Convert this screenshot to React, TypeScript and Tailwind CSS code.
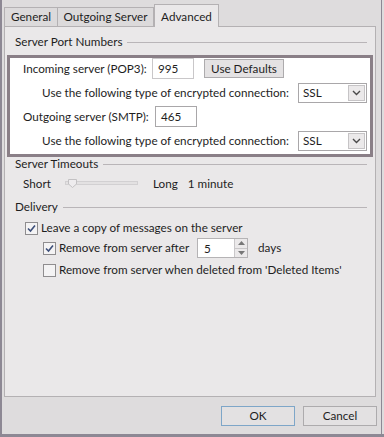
import React from "react";

const font = { fontFamily: 'Lato, "Noto Sans", "Liberation Sans", sans-serif' };

const GroupTitle = ({ label }: { label: string }) => (
  <div className="flex items-center gap-[5px] pl-[10px] pr-[8px] h-[16px]">
    <span className="whitespace-nowrap">{label}</span>
    <div className="flex-1 h-px bg-[#b9b5b8]" />
  </div>
);

const Chevron = () => (
  <svg width="9" height="6" viewBox="0 0 9 6">
    <path d="M1 1 L4.5 4.5 L8 1" fill="none" stroke="#4a4a4a" strokeWidth="1.4" />
  </svg>
);

const Select = () => (
  <div className="flex h-[20px] w-[69px] shrink-0 items-stretch border border-[#a9a7a9] bg-white">
    <span className="flex-1 pl-[4px] leading-[17px]">SSL</span>
    <div className="m-[1px] flex w-[17px] items-center justify-center border border-[#c6c4c6] bg-[#ebe9ea]">
      <Chevron />
    </div>
  </div>
);

const Check = ({ checked }: { checked: boolean }) => (
  <div className="flex h-[13px] w-[13px] shrink-0 items-center justify-center border border-[#8f8d8f] bg-[#f4f3f4]">
    {checked && (
      <svg width="9" height="9" viewBox="0 0 9 9">
        <path d="M1 4.5 L3.5 7 L8 1.5" fill="none" stroke="#3d4f7a" strokeWidth="1.6" />
      </svg>
    )}
  </div>
);

const App = () => {
  return (
    <div
      className="relative h-[437px] w-[384px] overflow-hidden whitespace-nowrap bg-[#dedcdd] text-[11.7px] text-[#1e1e1e]"
      style={font}
    >
      <div className="flex h-[434px] w-[382px] flex-col border-l-2 border-r border-[#8d8894]">
        {/* tabs */}
        <div className="flex items-end pl-[2px] pt-[3px] h-[26px]">
          <div className="flex h-[19px] w-[54px] items-center justify-center border border-b-0 border-[#b4b1b3] bg-[#dcdadb]">
            General
          </div>
          <div className="flex h-[19px] w-[96px] items-center justify-center border border-b-0 border-l-0 border-[#b4b1b3] bg-[#dcdadb]">
            Outgoing Server
          </div>
          <div className="relative z-10 -mb-px flex h-[23px] w-[65px] items-start justify-center border border-b-0 border-[#b4b1b3] bg-[#eae8e9] pt-[3px]">
            Advanced
          </div>
        </div>

        {/* panel */}
        <div className="ml-[2px] flex h-[371px] w-[372px] flex-col border border-[#b4b1b3] bg-[#eae8e9] pt-[7px]">
          <GroupTitle label="Server Port Numbers" />

          <div className="mx-[2px] mt-[5px] flex h-[102px] flex-col gap-[3px] border-[3px] border-[#8a7f87] bg-white pl-[13px] pr-[3px]">
            <div className="flex items-center h-[21px]">
              <span className="w-[129px]">Incoming server (POP3):</span>
              <div className="h-[21px] w-[42px] border border-[#c9c7c9] bg-white pl-[5px] leading-[19px]">995</div>
              <div className="ml-[10px] flex h-[19px] w-[80px] items-center justify-center border border-[#adabad] bg-[#e4e2e3]">
                Use Defaults
              </div>
            </div>
            <div className="flex items-center justify-end h-[21px] gap-[9px]">
              <span>Use the following type of encrypted connection:</span>
              <Select />
            </div>
            <div className="flex items-center h-[21px]">
              <span className="w-[132px]">Outgoing server (SMTP):</span>
              <div className="h-[21px] w-[42px] border border-[#a9a7a9] bg-white pl-[5px] leading-[19px]">465</div>
            </div>
            <div className="flex items-center justify-end h-[21px] gap-[9px]">
              <span>Use the following type of encrypted connection:</span>
              <Select />
            </div>
          </div>

          <div className="-mt-px">
            <GroupTitle label="Server Timeouts" />
          </div>
          <div className="mt-[3px] flex items-center h-[18px] pl-[18px]">
            <span className="w-[42px]">Short</span>
            <div className="relative w-[73px] h-[8px]">
              <div className="absolute left-0 right-0 top-[1px] h-[4px] border border-[#d2d0d2] bg-[#e3e1e2]" />
              <svg className="absolute left-[3px] top-[-1px]" width="9" height="9" viewBox="0 0 9 9">
                <path d="M0.5 0.5 H8.5 V5 L4.5 8.5 L0.5 5 Z" fill="#eeecee" stroke="#c3c1c3" />
              </svg>
            </div>
            <span className="ml-[15px]">Long</span>
            <span className="ml-[10px]">1 minute</span>
          </div>

          <div className="mt-[6px]">
            <GroupTitle label="Delivery" />
          </div>
          <div className="mt-[4px] flex items-center gap-[3px] pl-[20px] h-[18px]">
            <Check checked />
            <span>Leave a copy of messages on the server</span>
          </div>
          <div className="flex items-center pl-[38px] h-[22px]">
            <Check checked />
            <span className="ml-[3px] w-[138px]">Remove from server after</span>
            <div className="flex h-[20px] w-[51px] border border-[#b5b3b5] bg-white">
              <span className="flex-1 pl-[6px] leading-[18px]">5</span>
              <div className="flex w-[13px] flex-col border-l border-[#c9c7c9] bg-[#ebe9ea]">
                <div className="flex flex-1 items-center justify-center border-b border-[#c9c7c9]">
                  <svg width="7" height="4" viewBox="0 0 7 4"><path d="M0 4 L3.5 0 L7 4 Z" fill="#777" /></svg>
                </div>
                <div className="flex flex-1 items-center justify-center">
                  <svg width="7" height="4" viewBox="0 0 7 4"><path d="M0 0 L3.5 4 L7 0 Z" fill="#777" /></svg>
                </div>
              </div>
            </div>
            <span className="ml-[10px]">days</span>
          </div>
          <div className="mt-px flex items-center pl-[38px] h-[20px]">
            <Check checked={false} />
            <span className="ml-[3px]">Remove from server when deleted from 'Deleted Items'</span>
          </div>
        </div>

        {/* buttons */}
        <div className="flex justify-end gap-[8px] pr-[4px] pt-[9px]">
          <div className="flex h-[20px] w-[74px] items-center justify-center border border-[#7ea6c8] bg-[#e3e1e2]">OK</div>
          <div className="flex h-[20px] w-[74px] items-center justify-center border border-[#adabad] bg-[#e3e1e2]">Cancel</div>
        </div>
      </div>
      <div className="absolute bottom-0 left-0 right-0 h-[3px] bg-[#8d8894]" />
    </div>
  );
};

export default App;
